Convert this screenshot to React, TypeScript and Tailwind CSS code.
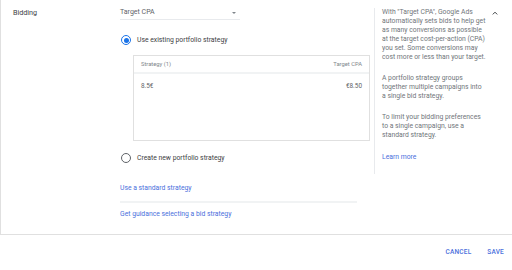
import React from 'react'

const HELP = [
  'With "Target CPA", Google Ads automatically sets bids to help get as many conversions as possible at the target cost-per-action (CPA) you set. Some conversions may cost more or less than your target.',
  'A portfolio strategy groups together multiple campaigns into a single bid strategy.',
  'To limit your bidding preferences to a single campaign, use a standard strategy.',
]

function Radio({ checked }: { checked?: boolean }) {
  return (
    <span
      className={
        'flex h-[10px] w-[10px] shrink-0 items-center justify-center rounded-full border ' +
        (checked ? 'border-[#1a73e8]' : 'border-[#5f6368]')
      }
    >
      {checked && <span className="h-[5px] w-[5px] rounded-full bg-[#1a73e8]" />}
    </span>
  )
}

export default function App() {
  return (
    <div
      className="flex h-[270px] w-[512px] flex-col overflow-hidden bg-white text-[6.5px] leading-[9px] text-[#3c4043]"
      style={{ fontFamily: 'Roboto, "Liberation Sans", sans-serif' }}
    >
      {/* main section */}
      <div className="flex h-[235px] items-start border-b border-l border-[#e0e0e0] pl-[12px] pt-[8px]">
        <div className="w-[107px] text-[7.2px]">Bidding</div>

        <div className="flex w-[250px] flex-col">
          {/* dropdown */}
          <div className="flex h-[12px] w-[120px] items-start justify-between border-b border-[#e8eaed] text-[7px] text-[#5f6368]">
            <span>Target CPA</span>
            <span className="mr-[4px] mt-[4px] h-0 w-0 border-x-[2.5px] border-t-[2.5px] border-x-transparent border-t-[#80868b]" />
          </div>

          <label className="ml-[1px] mt-[15px] flex items-center gap-[6px]">
            <Radio checked />
            <span className="text-[6.8px]">Use existing portfolio strategy</span>
          </label>

          {/* table */}
          <div className="ml-[13px] mt-[10px] h-[86px] w-[237px] border border-[#e0e0e0]">
            <div className="flex h-[18px] items-center justify-between border-b-2 border-[#f1f3f4] px-[7px] text-[5.8px] text-[#80868b]">
              <span>Strategy (1)</span>
              <span>Target CPA</span>
            </div>
            <div className="flex h-[24px] items-center justify-between px-[7px] text-[6.4px] text-[#5f6368]">
              <span>8.5€</span>
              <span>€8.50</span>
            </div>
          </div>

          <label className="ml-[1px] mt-[12px] flex items-center gap-[6px]">
            <Radio />
            <span className="text-[6.8px]">Create new portfolio strategy</span>
          </label>

          <a className="mt-[21px] text-[6.8px] text-[#4a6fdc]">Use a standard strategy</a>
          <div className="mt-[8px] h-[2px] w-[237px] bg-[#f1f3f4]" />
          <a className="mt-[7px] text-[6.8px] text-[#4a6fdc]">Get guidance selecting a bid strategy</a>
        </div>

        {/* help panel */}
        <div className="ml-[4px] flex w-[112px] flex-col gap-[12px] border-l border-[#e8eaed] pb-[12px] pl-[7px] text-[6.8px] text-[#70757a]">
          {HELP.map((p) => (
            <p key={p}>{p}</p>
          ))}
          <a className="mt-[1px] text-[#4a6fdc]">Learn more</a>
        </div>

        <div className="ml-[6px] pt-[3px]">
          <svg width="6" height="4" viewBox="0 0 6 4">
            <path d="M0.8 3.4 L3 1.2 L5.2 3.4" fill="none" stroke="#3c4043" strokeWidth="1" />
          </svg>
        </div>
      </div>

      {/* footer */}
      <div className="flex flex-1 items-center justify-end gap-[16px] pr-[8px] text-[6.5px] font-medium tracking-[0.2px] text-[#4a6fdc]">
        <span>CANCEL</span>
        <span>SAVE</span>
      </div>
    </div>
  )
}
